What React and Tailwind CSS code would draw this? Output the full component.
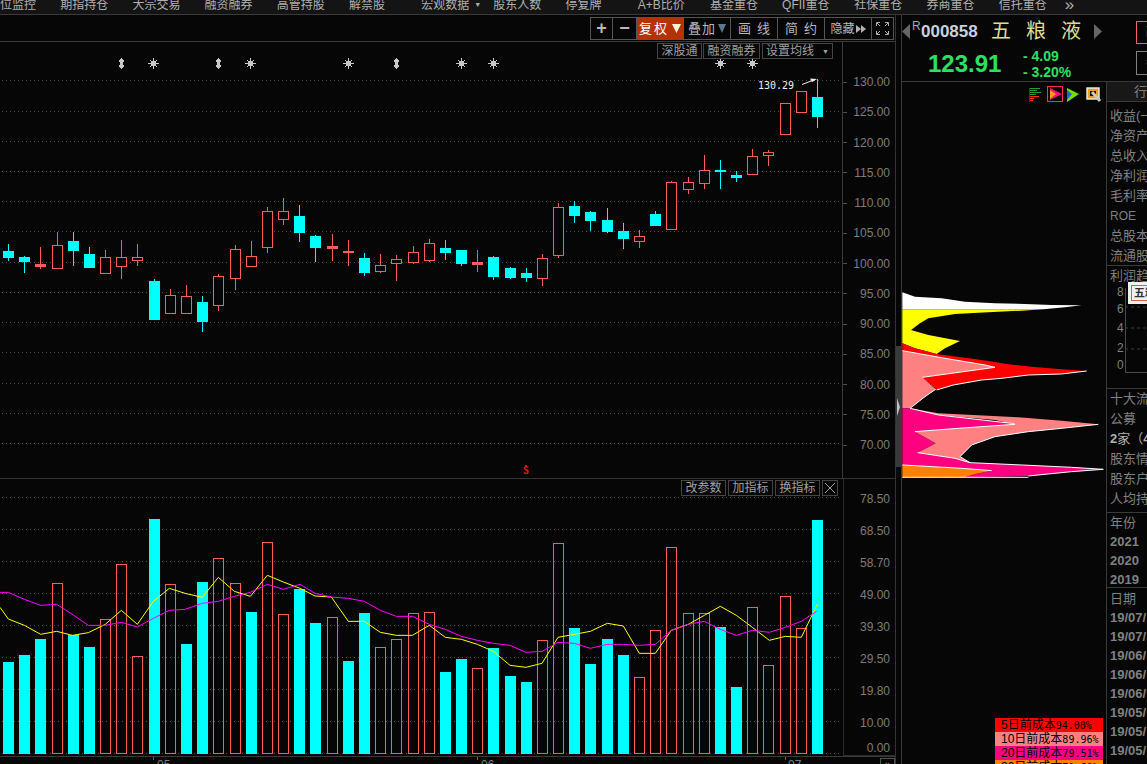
import React from "react";

const RED = "#ff5c5c";
const CYAN = "#00ffff";

const menuItems = ["仓位监控", "期指持仓", "大宗交易", "融资融券", "高管持股", "解禁股", "宏观数据", "股东人数", "停复牌", "A+B比价", "基金重仓", "QFII重仓", "社保重仓", "券商重仓", "信托重仓"];

// type, body top, body bottom, wick top, wick bottom
const candles = [
  ["c", 251, 257, 244, 260], ["c", 257, 261, 256, 272], ["f", 264, 266, 247, 268], ["r", 245, 268, 232, 268],
  ["c", 241, 250, 232, 265], ["c", 254, 267, 247, 267], ["r", 257, 273, 250, 273], ["r", 257, 266, 240, 278],
  ["r", 257, 260, 244, 265], ["c", 281, 319, 279, 319], ["r", 295, 313, 289, 313], ["r", 296, 313, 285, 313],
  ["c", 302, 321, 296, 331], ["r", 276, 305, 274, 310], ["r", 249, 278, 245, 289], ["r", 256, 266, 241, 266],
  ["r", 211, 247, 207, 252], ["r", 211, 219, 198, 224], ["c", 216, 232, 205, 241], ["c", 236, 247, 235, 261],
  ["f", 246, 248, 234, 260], ["f", 251, 252, 240, 265], ["c", 258, 272, 253, 275], ["r", 265, 271, 254, 272],
  ["r", 259, 263, 255, 280], ["r", 252, 262, 246, 263], ["r", 243, 260, 239, 261], ["c", 248, 252, 240, 259],
  ["c", 250, 263, 250, 265], ["f", 262, 264, 250, 271], ["c", 257, 276, 256, 279], ["c", 268, 277, 267, 278],
  ["c", 273, 277, 268, 281], ["r", 258, 278, 254, 285], ["r", 207, 255, 203, 257], ["c", 206, 215, 201, 222],
  ["c", 212, 220, 211, 230], ["c", 220, 231, 208, 232], ["c", 231, 238, 223, 248], ["r", 236, 241, 230, 247],
  ["c", 214, 225, 211, 225], ["r", 182, 229, 181, 229], ["r", 182, 189, 177, 193], ["r", 170, 183, 155, 188],
  ["c", 170, 171, 160, 188], ["c", 175, 177, 171, 181], ["r", 156, 174, 149, 174], ["r", 152, 155, 150, 165],
  ["r", 103, 134, 103, 134], ["r", 91, 112, 91, 112], ["c", 97, 116, 79, 127],
];

const volumes = [
  ["c", 662], ["c", 655], ["c", 639], ["r", 583], ["c", 635], ["c", 647], ["r", 619], ["r", 564], ["r", 656],
  ["c", 519], ["r", 584], ["c", 644], ["c", 582], ["r", 558], ["r", 583], ["c", 612], ["r", 542], ["r", 614],
  ["c", 589], ["c", 623], ["r", 617], ["c", 661], ["c", 613], ["r", 647], ["r", 639], ["r", 613], ["r", 612],
  ["c", 672], ["c", 659], ["r", 668], ["c", 648], ["c", 676], ["c", 682], ["r", 640], ["r", 543], ["c", 628],
  ["c", 664], ["c", 639], ["c", 655], ["r", 677], ["r", 630], ["r", 547], ["r", 613], ["r", 613], ["c", 627],
  ["c", 687], ["r", 607], ["r", 665], ["r", 596], ["r", 628], ["c", 520],
];

// points read as x, y pairs on three 3x crops starting at x 0, 300, 600
const yellowLine = [
  [0, [0, 412, 25, 447, 73, 466, 122, 493, 170, 484, 217, 496, 265, 488, 316, 463, 364, 421, 412, 463, 460, 394, 508, 355, 555, 370, 607, 382, 655, 322, 703, 364, 751, 379, 802, 316, 850, 336]],
  [300, [0, 355, 45, 378, 94, 381, 145, 454, 193, 454, 241, 487, 289, 496, 337, 496, 388, 466, 436, 502, 484, 508, 532, 523, 580, 544, 630, 586, 678, 592, 726, 580, 774, 502, 823, 493, 871, 484]],
  [600, [22, 460, 70, 468, 118, 550, 166, 550, 214, 481, 265, 463, 313, 436, 361, 409, 409, 436, 457, 472, 508, 511, 556, 499, 604, 502, 652, 403]],
];
const magentaLine = [
  [0, [0, 367, 25, 367, 73, 388, 122, 406, 170, 403, 217, 433, 265, 466, 316, 466, 364, 457, 412, 471, 460, 445, 508, 421, 555, 418, 607, 400, 655, 394, 703, 379, 751, 367, 802, 343, 850, 358]],
  [300, [0, 343, 45, 370, 94, 381, 145, 385, 193, 394, 241, 421, 289, 439, 337, 439, 388, 463, 436, 478, 484, 499, 532, 511, 580, 520, 630, 526, 678, 547, 726, 544, 774, 517, 823, 520, 871, 535]],
  [600, [22, 523, 70, 523, 118, 526, 166, 523, 214, 481, 265, 463, 313, 454, 361, 478, 409, 496, 457, 481, 508, 487, 556, 472, 604, 454, 650, 424]],
];

const linePoints = (parts) =>
  parts
    .map(([x0, flat]) => {
      const out = [];
      for (let i = 0; i < flat.length; i += 2) {
        out.push(`${x0 + flat[i] / 3},${470 + flat[i + 1] / 3}`);
      }
      return out.join(" ");
    })
    .join(" ");

const barX = (i) => 3 + Math.round(16.18 * i);

const priceGrid = [80, 111, 141, 171, 201, 231, 262, 292, 322, 352, 383, 413, 443];
const priceLabels = ["130.00", "125.00", "120.00", "115.00", "110.00", "105.00", "100.00", "95.00", "90.00", "85.00", "80.00", "75.00", "70.00"];
const volGrid = [497, 529, 561, 593, 625, 657, 689, 721, 753];
const volLabels = ["78.50", "68.50", "58.70", "49.00", "39.30", "29.50", "19.80", "10.00"];

const Star = ({ x }) => (
  <g fill="#c8c8c8">
    <rect x={x - 2} y={61} width="5" height="5" />
    <rect x={x} y={58} width="1" height="11" />
    <rect x={x - 5} y={63} width="11" height="1" />
    <rect x={x - 3} y={60} width="1" height="1" />
    <rect x={x + 3} y={60} width="1" height="1" />
    <rect x={x - 3} y={66} width="1" height="1" />
    <rect x={x + 3} y={66} width="1" height="1" />
  </g>
);

const Updown = ({ x }) => (
  <g fill="#c8c8c8">
    <rect x={x - 1} y={59} width="3" height="9" />
    <rect x={x - 2} y={60} width="5" height="2" />
    <rect x={x - 2} y={65} width="5" height="2" />
    <rect x={x} y={58} width="1" height="11" />
  </g>
);

const PriceChart = () => (
  <svg width="842" height="436" viewBox="0 42 842 436" className="shrink-0" shapeRendering="crispEdges">
    {priceGrid.map((y) => (
      <line key={y} x1="2" x2="842" y1={y + 0.5} y2={y + 0.5} stroke="#4d4d4d" strokeDasharray="1 3" />
    ))}
    {[121, 218, 396].map((x) => <Updown key={x} x={x} />)}
    {[153, 250, 348, 461, 493, 720, 752].map((x) => <Star key={x} x={x} />)}
    {candles.map(([type, top, bottom, wickTop, wickBottom], i) => {
      const x = barX(i);
      const color = type === "c" ? CYAN : RED;
      return (
        <g key={i}>
          <rect x={x + 5} y={wickTop} width="1" height={wickBottom - wickTop + 1} fill={color} />
          {type === "r" ? (
            <rect x={x + 0.5} y={top + 0.5} width="10" height={bottom - top} fill="#060606" stroke={color} />
          ) : (
            <rect x={x} y={top} width="11" height={bottom - top + 1} fill={color} />
          )}
        </g>
      );
    })}
    <text x="758" y="89" fill="#f0f0f0" fontSize="10" className="font-['DejaVu_Sans_Mono',monospace]" shapeRendering="auto">130.29</text>
    <path d="M802 84.5L815 79.5" stroke="#f0f0f0" shapeRendering="auto" />
    <path d="M817 79L810 78.5L812 82Z" fill="#f0f0f0" shapeRendering="auto" />
    <text x="523" y="474" fill="#e81010" fontSize="10" fontWeight="bold" className="font-['DejaVu_Sans_Mono',monospace]" shapeRendering="auto">S</text>
    <rect x="525" y="465" width="2" height="1" fill="#e81010" />
  </svg>
);

const VolumeChart = () => (
  <svg width="843" height="277" viewBox="0 479 843 277" className="shrink-0" shapeRendering="crispEdges">
    {volGrid.map((y) => (
      <line key={y} x1="2" x2="842" y1={y + 0.5} y2={y + 0.5} stroke="#4d4d4d" strokeDasharray="1 3" />
    ))}
    {volumes.map(([type, top], i) => {
      const x = barX(i);
      return type === "c" ? (
        <rect key={i} x={x} y={top} width="11" height={754 - top} fill={CYAN} />
      ) : (
        <rect key={i} x={x + 0.5} y={top + 0.5} width="10" height={753 - top} fill="none" stroke={RED} />
      );
    })}
    <polyline points={linePoints(yellowLine)} fill="none" stroke="#ffff00" shapeRendering="auto" />
    <polyline points={linePoints(magentaLine)} fill="none" stroke="#ff00ff" shapeRendering="auto" />
  </svg>
);

const ChipChart = () => (
  <svg width="204" height="683" viewBox="902 82 204 683" className="block">
    <g shapeRendering="crispEdges">
      <path d="M1029 88h11M1029 90h8M1029 92h12M1029 94h7" stroke="#1f9a3a" />
      <path d="M1029 96h10M1029 98h5M1029 100h4" stroke="#ff3000" />
      <path d="M1029.5 88v14" stroke="#2020ff" />
      <rect x="1047.5" y="86.5" width="15" height="15" fill="none" stroke="#ff3050" />
    </g>
    <path d="M1050 88L1062 94L1050 100Z" fill="#ff1080" />
    <path d="M1050 90L1056 94L1050 99Z" fill="#ffa000" />
    <path d="M1067 88L1079 94L1067 102Z" fill="#70e000" />
    <path d="M1067 90L1072 94L1067 100Z" fill="#2060ff" />
    <rect x="1087" y="88" width="12" height="11" fill="#e8a020" stroke="#f0f0f0" strokeWidth="1.4" />
    <rect x="1090" y="91" width="6" height="5" fill="#101010" />
    <path d="M1092 92L1100 101" stroke="#c8c8c8" strokeWidth="3" />

    <g transform="translate(895 280) scale(0.3333)" strokeLinejoin="miter">
      <polygon fill="#ffffff" points="22,37 60,50 140,55 210,65 300,70 390,72 470,75 560,76 510,82 445,88 22,88" />
      <polygon fill="#ffff00" points="22,88 445,88 380,92 250,98 180,102 100,115 75,130 48,150 100,165 195,183 150,205 125,222 60,205 22,190" />
      <polygon fill="#ff0000" points="22,190 60,205 125,222 200,232 280,243 340,253 410,260 500,268 575,273 500,282 400,285 320,295 260,300 175,315 125,330 82,292 300,262 270,255 150,235 22,212" />
      <polygon fill="#ff8080" points="22,212 150,235 270,255 300,262 82,292 122,328 90,350 45,385 22,385" />
      <polygon fill="#ff0080" points="22,385 45,385 130,405 350,430 360,433 190,445 60,455 122,490 68,518 180,535 225,548 380,555 530,562 625,568 530,575 400,588 210,592 240,582 290,572 200,565 22,555" />
      <polygon fill="#ff8080" points="45,385 130,400 370,412 500,422 610,433 500,445 400,455 300,470 230,495 195,530 225,548 180,535 68,518 122,490 60,455 190,445 360,433 300,420 130,405" />
      <polygon fill="#ff8000" points="22,555 200,565 290,572 240,582 210,592 22,592" />
      <g fill="none" stroke="#ffffff" strokeWidth="3">
        <polyline points="22,212 150,235 270,255 300,262 82,292" />
        <polyline points="575,273 500,282 400,285 320,295 260,300 175,315 125,330" />
        <polyline points="122,328 90,350 45,385" />
        <polyline points="45,385 130,405 350,430 360,433 190,445 60,455" />
        <polyline points="610,433 500,445 400,455 300,470 230,495 195,530 225,548" />
        <polyline points="68,518 180,535 225,548 380,555 530,562 625,568 530,575 400,588" />
        <polyline points="22,555 200,565 290,572" />
        <path d="M22 592H400" />
      </g>
    </g>
  </svg>
);

const chipLegend = [
  ["bg-[#ff0000]", "5日前成本", "94.00%", "pl-[6px]"],
  ["bg-[#ff8080]", "10日前成本", "89.96%", "pl-[6px]"],
  ["bg-[#ff0080]", "20日前成本", "79.51%", "pl-[6px]"],
  ["bg-[#ff8000]", "30日前成本", "71.60%", "pl-[6px]"],
];

const panelRow = "h-[20px] leading-[20px] whitespace-nowrap";
const dataRow = "h-[19px] leading-[19px] whitespace-nowrap font-bold";
const toolBtn = "h-full flex items-center justify-center text-[13px] text-[#b8b8b8] whitespace-nowrap";
const tagBtn = "h-[16px] flex items-center justify-center border border-[#444] text-[12px] leading-none text-[#a0a0a0]";

const Toolbar = () => (
  <div className="h-[27px] shrink-0 border-b border-[#3a3a3a] flex justify-end pr-px pt-[2px]">
    <div className="h-[23px] flex border border-[#555] divide-x divide-[#555]">
      <div className={`${toolBtn} w-[22px] text-[18px] font-bold`}>+</div>
      <div className={`${toolBtn} w-[24px] text-[18px] font-bold`}>−</div>
      <div className={`${toolBtn} w-[47px] bg-[#b63200] !text-white gap-[3px]`}>
        <span className="tracking-[2px]">复权</span>
        <svg width="9" height="9" viewBox="0 0 9 9"><path d="M0 0H9L4.5 9Z" fill="#fff3e0" /></svg>
      </div>
      <div className={`${toolBtn} w-[47px] gap-[2px]`}>
        <span className="tracking-[1px]">叠加</span>
        <svg width="8" height="9" viewBox="0 0 8 9"><path d="M0 0H8L4 9Z" fill="#5a7890" /></svg>
      </div>
      <div className={`${toolBtn} w-[47px] tracking-[6px] pl-[6px]`}>画线</div>
      <div className={`${toolBtn} w-[47px] tracking-[6px] pl-[6px]`}>简约</div>
      <div className={`${toolBtn} w-[47px] gap-[1px]`}>
        <span className="text-[12px]">隐藏</span>
        <svg width="10" height="8" viewBox="0 0 10 8"><path d="M0 0L5 4L0 8ZM5 0L10 4L5 8Z" fill="#b0b0b0" /></svg>
      </div>
      <div className={`${toolBtn} w-[21px]`}>
        <svg width="13" height="13" viewBox="0 0 13 13" fill="none" stroke="#b0b0b0"><path d="M0.5 4V0.5H4M9 0.5H12.5V4M12.5 9V12.5H9M4 12.5H0.5V9" /><path d="M1 1L4 4M12 1L9 4M12 12L9 9M1 12L4 9" /></svg>
      </div>
    </div>
  </div>
);

export default function App() {
  return (
    <div className="w-[1147px] h-[764px] overflow-hidden flex flex-col bg-[#060606] text-[#808080] font-['Liberation_Sans','Noto_Sans_CJK_SC',sans-serif]">
      {/* tab strip, cut off by the window top */}
      <div className="h-[15px] shrink-0 border-b border-[#3a3a3a] bg-[#141414] flex items-end overflow-hidden -ml-[12px] text-[12px] leading-[12px] text-[#b0b0b0] pb-[3px]">
        {menuItems.map((m) => (
          <div key={m} className="w-[72.2px] shrink-0 whitespace-nowrap flex items-center gap-[5px]">
            {m}
            {m === "宏观数据" && <span className="text-[7px]">▼</span>}
          </div>
        ))}
        <div className="ml-[-6px] text-[17px] leading-[12px]">»</div>
      </div>

      <div className="flex-1 min-h-0 flex">
        <div className="w-[896px] shrink-0 border-r border-[#333] flex flex-col">
          <Toolbar />

          <div className="h-[437px] shrink-0 border-b border-[#333] flex relative">
            <PriceChart />
            <div className="flex-1 border-l border-[#3a3a3a] pt-[25px] text-[12px] text-[#7c7c7c]">
              {priceLabels.map((p) => (
                <div key={p} className="h-[30.25px] flex items-center justify-between pr-[5px]">
                  <span className="w-[4px] h-px bg-[#4d4d4d]" />
                  <span>{p}</span>
                </div>
              ))}
            </div>
            <div className="absolute left-[657px] top-px flex">
              <div className={`${tagBtn} w-[45px] mr-px`}>深股通</div>
              <div className={`${tagBtn} w-[57px] mr-[2px]`}>融资融券</div>
              <div className={`${tagBtn} w-[71px] gap-[8px]`}>
                <span>设置均线</span>
                <span className="text-[7px]">▼</span>
              </div>
            </div>
          </div>

          <div className="h-[278px] shrink-0 border-b border-[#3a3a3a] flex relative">
            <VolumeChart />
            <div className="flex-1 border border-t-0 border-r-0 border-[#2c2c2c] flex flex-col items-end gap-[16px] pt-[12px] pr-[5px] text-[12px] leading-[16px] text-[#7c7c7c]">
              {volLabels.map((v) => (
                <div key={v} className="h-[16px]">{v}</div>
              ))}
              <div className="h-[16px] -mt-[7px]">0.00</div>
            </div>
            <div className="absolute left-[681px] top-px flex gap-[2px]">
              <div className={`${tagBtn} w-[45px]`}>改参数</div>
              <div className={`${tagBtn} w-[45px]`}>加指标</div>
              <div className={`${tagBtn} w-[45px]`}>换指标</div>
              <div className={`${tagBtn} w-[16px]`}>
                <svg width="10" height="10" viewBox="0 0 10 10" stroke="#a0a0a0"><path d="M0 0L10 10M10 0L0 10" /></svg>
              </div>
            </div>
          </div>

          <div className="flex-1 flex overflow-hidden">
            <svg width="880" height="8" viewBox="0 757 880 8" className="shrink-0">
              <path d="M153.5 757V760M477.5 757V760M785.5 757V760" stroke="#666" />
              <text x="157" y="769" fontSize="12" fill="#7c7c7c">05</text>
              <text x="481" y="769" fontSize="12" fill="#7c7c7c">06</text>
              <text x="788" y="769" fontSize="12" fill="#7c7c7c">07</text>
            </svg>
            <div className="w-[15px] mt-px border border-b-0 border-[#555] text-[11px] leading-[10px] text-center text-[#a0a0a0]">»</div>
          </div>
        </div>

        {/* chip scroll strip */}
        <div className="w-[5px] shrink-0 pt-[331px]">
          <div className="h-[121px] bg-[#3a3a3a] flex items-center">
            <svg width="4" height="18" viewBox="0 0 4 18"><path d="M1 0L4 9L1 18Z" fill="#c0c0c0" /></svg>
          </div>
        </div>

        <div className="flex-1 min-w-0 border-l border-[#3a3a3a] flex flex-col">
          <div className="h-[67px] shrink-0 border-b border-[#3a3a3a] flex flex-col overflow-hidden">
            <div className="h-[32px] flex items-center">
              <svg width="8" height="15" viewBox="0 0 8 15" className="shrink-0 mt-[1px]"><path d="M8 0V15L0 7.5Z" fill="#666" /></svg>
              <span className="w-[9px] ml-[2px] -mt-[10px] shrink-0 text-[12px] leading-none text-[#9aa8b8]">R</span>
              <span className="w-[59px] mt-[1px] shrink-0 text-[17px] font-bold leading-none text-[#c6d2dc]">000858</span>
              <span className="w-[103px] ml-[11px] shrink-0 text-[20px] leading-none whitespace-nowrap tracking-[15px] text-[#dcdc96]">五粮液</span>
              <svg width="8" height="15" viewBox="0 0 8 15" className="shrink-0 mt-[1px]"><path d="M0 0V15L8 7.5Z" fill="#666" /></svg>
              <div className="w-[30px] h-[23px] ml-[34px] mt-[3px] shrink-0 border border-[#ff6060] text-[12px] leading-[21px] text-[#ff6060] pl-[9px] whitespace-nowrap">融</div>
            </div>
            <div className="flex-1 flex items-center">
              <span className="ml-[26px] w-[74px] shrink-0 text-[24px] leading-none font-bold text-[#2de060]">123.91</span>
              <div className="ml-[21px] w-[60px] shrink-0 flex flex-col gap-[5px] text-[14px] leading-[11px] font-bold text-[#2de060] whitespace-nowrap">
                <span>- 4.09</span>
                <span>- 3.20%</span>
              </div>
              <div className="w-[30px] h-[24px] ml-[53px] -mt-[3px] shrink-0 border border-[#808080] text-[12px] leading-[22px] text-[#808080] pl-[9px] whitespace-nowrap">券</div>
            </div>
          </div>

          <div className="flex-1 min-h-0 flex">
            <div className="w-[205px] shrink-0 border-r border-[#3a3a3a] relative">
              <ChipChart />
              <div className="absolute left-[93px] top-[636px] w-[108px] text-[12px] text-black">
                {chipLegend.map(([bg, name, pct, pad]) => (
                  <div key={name} className={`${bg} ${pad} h-[14px] leading-[14px] whitespace-nowrap`}>
                    {name}
                    <span className="font-['DejaVu_Sans_Mono',monospace] text-[10px]">{pct}</span>
                  </div>
                ))}
              </div>
            </div>

            <div className="flex-1 min-w-0 overflow-hidden text-[13px] relative">
              <div className="h-[20px] border-b border-[#3a3a3a] bg-[#181818] pl-[27px] text-[13px] leading-[19px] whitespace-nowrap">行情</div>
              <div className="pl-[3px] pt-[4px] whitespace-nowrap">
                <div className={panelRow}>收益(一</div>
                <div className={panelRow}>净资产</div>
                <div className={panelRow}>总收入</div>
                <div className={panelRow}>净利润</div>
                <div className={panelRow}>毛利率</div>
                <div className={`${panelRow} text-[12px]`}>ROE</div>
                <div className={panelRow}>总股本</div>
                <div className={panelRow}>流通股</div>
                <div className={`${panelRow} -ml-[3px] pl-[3px] border-t border-[#3a3a3a] -mt-px`}>利润趋势</div>
              </div>
              <svg width="40" height="103" viewBox="1107 285 40 103" className="block">
                <path d="M1125.5 288V372.5H1147" fill="none" stroke="#4a4a4a" />
                <path d="M1125 307H1147M1125 328H1147M1125 349H1147" stroke="#3a3a3a" strokeDasharray="3 3" />
                {[["8", 296], ["6", 313], ["4", 332], ["2", 352], ["0", 369]].map(([t, y]) => (
                  <text key={t} x="1117" y={y} fontSize="12" fill="#808080">{t}</text>
                ))}
              </svg>
              <div className="pl-[3px] border-t border-[#3a3a3a]">
                <div className={panelRow}>十大流通</div>
                <div className={panelRow}>公募</div>
                <div className={`${panelRow} text-[#b0b0b0]`}><b>2</b>家（<b>4</b></div>
                <div className={panelRow}>股东情况</div>
                <div className={panelRow}>股东户数</div>
                <div className={panelRow}>人均持股</div>
              </div>
              <div className="mt-[3px] pl-[3px] border-t border-[#3a3a3a]">
                <div className="h-[19px] leading-[19px]">年份</div>
                <div className={dataRow}>2021</div>
                <div className={dataRow}>2020</div>
                <div className={`${dataRow} !h-[17px]`}>2019</div>
              </div>
              <div className="pl-[3px] border-t border-[#3a3a3a]">
                <div className="h-[19px] mt-px leading-[19px]">日期</div>
                {["19/07/", "19/07/", "19/06/", "19/06/", "19/06/", "19/05/", "19/05/", "19/05/"].map((d, i) => (
                  <div key={i} className={dataRow}>{d}</div>
                ))}
              </div>
              <div className="absolute left-[21px] top-[200px] w-[30px] h-[22px] bg-[#f0f0f0] p-[3px] overflow-hidden">
                <div className="h-full border border-[#d06050] text-[11px] leading-[14px] font-bold text-[#303030] pl-[2px] whitespace-nowrap">五粮</div>
              </div>
            </div>
          </div>
        </div>
      </div>
    </div>
  );
}
